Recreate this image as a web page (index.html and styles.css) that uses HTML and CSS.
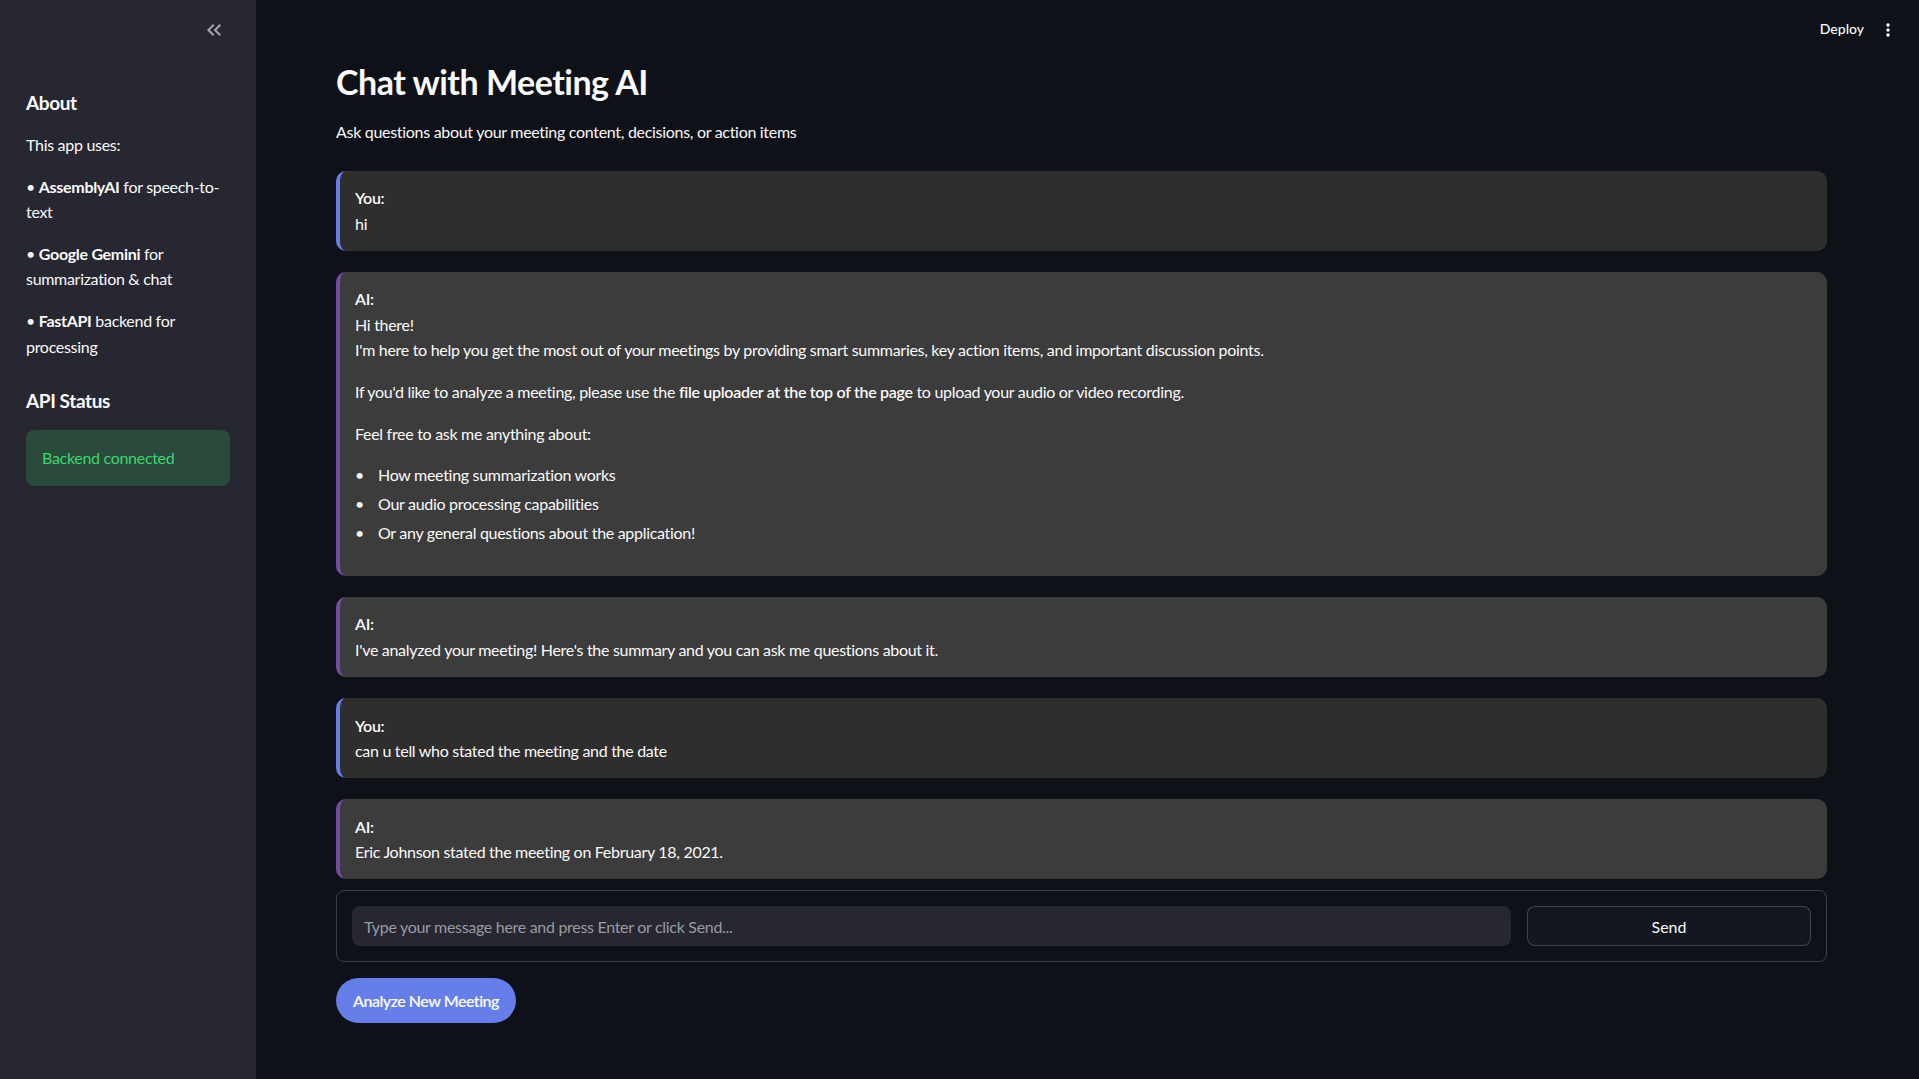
FILE: index.html
```html
<!DOCTYPE html>
<html lang="en">
<head>
<meta charset="utf-8">
<title>Chat with Meeting AI</title>
<link rel="stylesheet" href="styles.css">
</head>
<body>
<div class="app">
  <aside class="sidebar">
    <div class="sb-top">
      <button class="collapse" aria-label="Collapse sidebar">
        <svg width="24" height="24" viewBox="0 0 24 24"><path d="M17.59 18L19 16.59 14.42 12 19 7.41 17.59 6l-6 6z"/><path d="M11 18l1.41-1.41L7.83 12l4.58-4.59L11 6l-6 6z"/></svg>
      </button>
    </div>
    <div class="sb-body">
      <h3 class="sb-h">About</h3>
      <p>This app uses:</p>
      <p>• <strong>AssemblyAI</strong> for speech-to-<br>text</p>
      <p>• <strong>Google Gemini</strong> for<br>summarization &amp; chat</p>
      <p>• <strong>FastAPI</strong> backend for<br>processing</p>
      <h3 class="sb-h sb-h2">API Status</h3>
      <div class="success">Backend connected</div>
    </div>
  </aside>
  <main class="main">
    <header class="topbar">
      <span class="deploy">Deploy</span>
      <svg class="more" width="20" height="20" viewBox="0 0 20 20"><circle cx="10" cy="5" r="1.7"/><circle cx="10" cy="10" r="1.7"/><circle cx="10" cy="15" r="1.7"/></svg>
    </header>
    <div class="content">
      <h1 class="title">Chat with Meeting AI</h1>
      <p class="subtitle">Ask questions about your meeting content, decisions, or action items</p>
      <div class="chat">
        <div class="msg user">
          <div class="who">You:</div>
          <div class="text">hi</div>
        </div>
        <div class="msg ai">
          <div class="who">AI:</div>
          <p>Hi there!<br>I'm here to help you get the most out of your meetings by providing smart summaries, key action items, and important discussion points.</p>
          <p>If you'd like to analyze a meeting, please use the <strong>file uploader at the top of the page</strong> to upload your audio or video recording.</p>
          <p>Feel free to ask me anything about:</p>
          <ul>
            <li>How meeting summarization works</li>
            <li>Our audio processing capabilities</li>
            <li>Or any general questions about the application!</li>
          </ul>
        </div>
        <div class="msg ai">
          <div class="who">AI:</div>
          <div class="text">I've analyzed your meeting! Here's the summary and you can ask me questions about it.</div>
        </div>
        <div class="msg user">
          <div class="who">You:</div>
          <div class="text">can u tell who stated the meeting and the date</div>
        </div>
        <div class="msg ai">
          <div class="who">AI:</div>
          <div class="text">Eric Johnson stated the meeting on February 18, 2021.</div>
        </div>
      </div>
      <form class="chat-form">
        <input class="msg-input" type="text" placeholder="Type your message here and press Enter or click Send...">
        <button type="button" class="send">Send</button>
      </form>
      <button type="button" class="analyze">Analyze New Meeting</button>
    </div>
  </main>
</div>
</body>
</html>
```

FILE: styles.css
```css
* { box-sizing: border-box; }
html, body { margin: 0; padding: 0; }
body {
  background: #0e1117;
  color: #fafafa;
  font-family: "Lato", "Noto Sans", sans-serif;
  font-size: 16px;
  line-height: 1.6;
  letter-spacing: -0.3px;
}
.app { display: flex; min-height: 1079px; }

.sidebar {
  width: 256px;
  flex: 0 0 256px;
  background: #262730;
}
.sb-top {
  height: 60px;
  display: flex;
  justify-content: flex-end;
  align-items: center;
  padding-right: 30px;
}
.collapse {
  background: none;
  border: 0;
  padding: 0;
  width: 24px;
  height: 24px;
  fill: #a6a7ae;
  display: flex;
}
.sb-body { padding: 31px 26px 0; }
.sb-h {
  margin: 0 0 17px;
  font-size: 19px;
  line-height: 24px;
  font-weight: 700;
  letter-spacing: -0.4px;
}
.sb-h2 { margin-top: 30px; }
.sb-body p { margin: 0 0 16px; }
.sb-body strong { font-weight: 700; }
.success {
  background: #2a4a3b;
  color: #3dd56d;
  border-radius: 8px;
  padding: 15px 16px;
  line-height: 25.6px;
}

.main { flex: 1; display: flex; flex-direction: column; }
.topbar {
  height: 60px;
  display: flex;
  justify-content: flex-end;
  align-items: center;
  gap: 14px;
  padding-right: 21px;
}
.deploy { font-size: 14px; font-weight: 500; line-height: 1; margin-top: -2px; letter-spacing: 0; }
.more { fill: #fafafa; }

.content { padding: 0 92px 40px 80px; }
.title {
  margin: 0;
  font-size: 34px;
  line-height: 44px;
  font-weight: 700;
  letter-spacing: -0.5px;
}
.subtitle { margin: 15px 0 26px; line-height: 25.6px; }

.chat { display: flex; flex-direction: column; gap: 21px; }
.msg {
  border-radius: 10px;
  padding: 14.5px 15px;
  border-left: 4px solid #764ba2;
  line-height: 25.6px;
}
.msg.user { background: #2e2e2e; border-left-color: #667eea; }
.msg.ai { background: #3c3c3c; }
.who { font-weight: 600; }
.msg p { margin: 0 0 16px; }
.msg strong { font-weight: 600; }
.msg ul { margin: 0 0 16px; padding: 0 0 0 23px; list-style: none; }
.msg li { margin: 3.2px 0; }
.msg li::before { content: "•"; display: inline-block; width: 23px; margin-left: -23px; }

.chat-form {
  margin: 11px 0 16px;
  border: 1px solid rgba(250,250,250,0.2);
  border-radius: 8px;
  padding: 15px;
  display: grid;
  grid-template-columns: 1fr 284px;
  gap: 16px;
}
.msg-input {
  height: 40px;
  border: 0;
  border-radius: 8px;
  background: #262730;
  color: #fafafa;
  font: inherit;
  letter-spacing: -0.3px;
  padding: 0 12px;
  outline: none;
}
.msg-input::placeholder { color: #9a9ba2; }
.send {
  height: 40px;
  background: #131720;
  color: #fafafa;
  border: 1px solid rgba(250,250,250,0.2);
  border-radius: 8px;
  font: inherit;
  letter-spacing: 0;
}
.analyze {
  background: #667eea;
  color: #fff;
  border: 0;
  border-radius: 23px;
  height: 45px;
  padding: 0 17px;
  font: inherit;
  font-weight: 600;
  letter-spacing: -0.5px;
}
```
